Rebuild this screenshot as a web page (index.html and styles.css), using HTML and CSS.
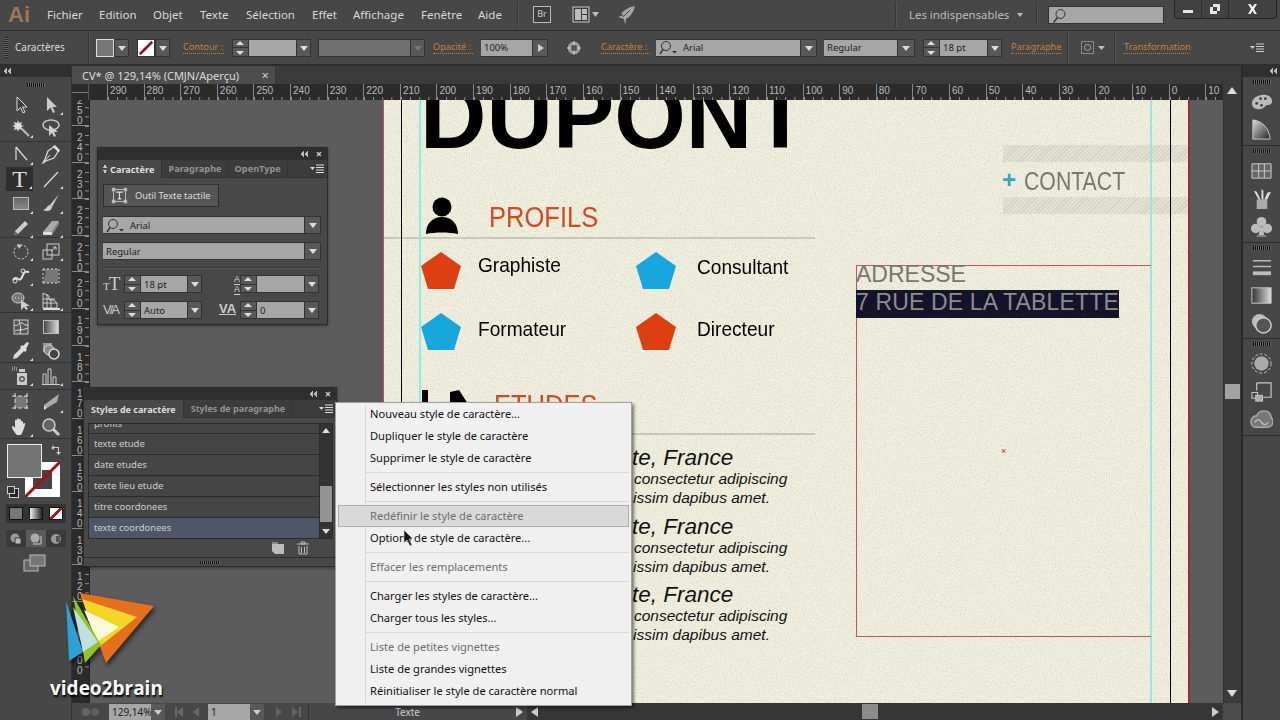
FILE: index.html
```html
<!DOCTYPE html>
<html lang="fr">
<head>
<meta charset="utf-8">
<title>Illustrator</title>
<link rel="stylesheet" href="styles.css">
</head>
<body>
<div class="app">

  <header class="menubar">
    <span class="ai">Ai</span>
    <nav class="menus">
      <span>Fichier</span><span>Edition</span><span>Objet</span><span>Texte</span><span>Sélection</span><span>Effet</span><span>Affichage</span><span>Fenêtre</span><span>Aide</span>
    </nav>
    <i class="vsep"></i>
    <span class="br">Br</span>
    <svg class="layout-ic" width="30" height="18" viewBox="0 0 30 18"><rect x="1" y="1" width="16" height="15" fill="#3d3d3d" stroke="#ccc"/><rect x="3" y="3" width="6" height="11" fill="#bbb"/><rect x="10" y="3" width="5" height="5" fill="#bbb"/><rect x="10" y="9" width="5" height="5" fill="#bbb"/><path d="M20 6h7l-3.500 5z" fill="#bbb"/></svg>
    <svg class="rocket-ic" width="20" height="20" viewBox="0 0 20 20"><path d="M19 1C13 2 8 5 5 9l3 1-6 2 6 2 1 5c1-2 1-3 1-5 5-3 8-8 9-13z" fill="#a6a6a6"/><path d="M14 5 7 12" stroke="#454545"/></svg>
    <span class="spring"></span>
    <i class="vsep"></i>
    <span class="workspace">Les indispensables</span>
    <i class="tri-s"></i>
    <i class="vsep"></i>
    <span class="searchbox">
      <svg width="14" height="16" viewBox="0 0 14 16"><circle cx="8.500" cy="6" r="4.500" fill="none" stroke="#333"/><path d="M5.500 9.500 1.500 14.500" stroke="#333" stroke-width="1.500"/></svg>
    </span>
    <div class="winbtns">
      <span class="wb wb-min"><i></i></span>
      <span class="wb wb-res"><svg width="12" height="12" viewBox="0 0 12 12"><path d="M4 1h7v7H8v3H1V4h3z M4 4v4h4V4z" fill="#e6e6e6" fill-rule="evenodd"/></svg></span>
      <span class="wb wb-x"><svg width="11" height="10" viewBox="0 0 11 10"><path d="M1 0h2.500L5.500 3 7.500 0H10L7 5l3 5H7.500L5.500 7l-2 3H1l3-5z" fill="#eee"/></svg></span>
    </div>
  </header>

  <section class="controlbar">
    <span class="lab-main">Caractères</span>
    <i class="csep"></i>
    <span class="swatch fillsw ml6"></span><span class="dd w15"></span>
    <span class="swatch strokesw ml8"><svg width="16" height="16" viewBox="0 0 18 18"><path d="M2 16 16 2" stroke="#8a1826" stroke-width="3"/></svg></span><span class="dd w15"></span>
    <span class="olab w41 ml13">Contour :</span>
    <span class="spin ml8"></span><span class="field w47"></span><span class="dd w15"></span>
    <span class="field dark w92 ml7"></span><span class="dd dim w15"></span>
    <span class="olab w40 ml8">Opacité :</span>
    <span class="field w51 ml8">100%</span><span class="dd play w16"></span>
    <svg class="globe" width="16" height="16" viewBox="0 0 16 16"><circle cx="8" cy="8" r="7" fill="#999" stroke="#333"/><circle cx="8" cy="8" r="3" fill="#555"/><path d="M8 1v4M8 11v4M1 8h4M11 8h4" stroke="#ddd"/></svg>
    <span class="olab w49 ml19">Caractère :</span>
    <span class="field w144 ml6"><svg class="mag" width="20" height="15" viewBox="0 0 20 15"><circle cx="7" cy="6" r="4.500" fill="none" stroke="#333"/><path d="M4 9.500 1 14" stroke="#333" stroke-width="1.400"/><path d="M13 11h5l-2.500 2.500z" fill="#333"/></svg>Arial</span><span class="dd w17"></span>
    <span class="field w73 ml7">Regular</span><span class="dd w18"></span>
    <span class="spin ml8"></span><span class="field w47">18 pt</span><span class="dd w15"></span>
    <span class="olab w50 ml9">Paragraphe</span>
    <i class="csep ml6"></i>
    <svg class="align-ic" width="28" height="16" viewBox="0 0 28 16"><rect x="1.500" y="1.500" width="12" height="12" fill="none" stroke="#aaa" stroke-dasharray="2 1"/><circle cx="7.500" cy="7.500" r="3" fill="none" stroke="#aaa"/><path d="M18 6h7l-3.500 4z" fill="#bbb"/></svg>
    <i class="csep ml6"></i>
    <span class="olab w66 ml8">Transformation</span>
    <svg class="pmenu-ic" width="14" height="10" viewBox="0 0 14 10"><path d="M0 3h5L2.500 6z" fill="#ccc"/><path d="M6 1h8M6 3.500h8M6 6h8M6 8.500h8" stroke="#ccc"/></svg>
  </section>

  <div class="workarea">

    <aside class="toolbar">
      <div class="dockhead left"><i class="chev"></i></div>
      <div class="handle"></div>
      <div class="toolgrp two">
        <span class="tool"><svg viewBox="0 0 20 20"><path d="M6 2v14l3.500-3.500L12 18l2-1-2.500-5H16z" fill="#3d3d3d" stroke="#ddd"/></svg></span>
        <span class="tool cn"><svg viewBox="0 0 20 20"><path d="M6 2v14l3.500-3.500L12 18l2-1-2.500-5H16z" fill="#ccc"/></svg></span>
        <span class="tool cn"><svg viewBox="0 0 20 20"><path d="M7 2l1 3 3-1-1 3 3 1-3 1 1 3-3-1-1 3-1-3-3 1 1-3-3-1 3-1-1-3 3 1z" fill="#ddd"/><path d="M10 10l8 8" stroke="#bbb" stroke-width="2"/></svg></span>
        <span class="tool"><svg viewBox="0 0 20 20"><ellipse cx="10" cy="7" rx="8" ry="5" fill="none" stroke="#ccc" stroke-width="1.500"/><path d="M8 7v11l3-3 2 4 2-1-2-4h4z" fill="#ccc"/></svg></span>
      </div>
      <div class="toolgrp four">
        <span class="tool cn"><svg viewBox="0 0 20 20"><path d="M5 3v13M5 3l11 13" fill="none" stroke="#ddd" stroke-width="1.200"/></svg></span>
        <span class="tool"><svg viewBox="0 0 20 20"><path d="M14 2l4 4-5 8-8 3-3 2 2-4 3-8z" fill="none" stroke="#ddd" stroke-width="1.200"/><path d="M13 1l6 6-2 1-5-5z" fill="#ddd"/><path d="M3 18 9 11" stroke="#ddd"/></svg></span>
        <span class="tool on cn"><b class="t-ic">T</b></span>
        <span class="tool cn"><svg viewBox="0 0 20 20"><path d="M3 18 17 3" stroke="#ddd" stroke-width="1.200"/></svg></span>
        <span class="tool cn"><svg viewBox="0 0 20 20"><defs><linearGradient id="gr" x1="0" y1="0" x2="0" y2="1"><stop offset="0" stop-color="#666"/><stop offset="1" stop-color="#888"/></linearGradient></defs><rect x="2.500" y="4.500" width="15" height="12" fill="url(#gr)" stroke="#bbb"/></svg></span>
        <span class="tool cn"><svg viewBox="0 0 20 20"><path d="M18 1 9 12l2 2z" fill="#ccc"/><path d="M9 12c-3 0-3 4-7 5 3 2 9 1 9-3z" fill="#ccc"/></svg></span>
        <span class="tool cn"><svg viewBox="0 0 20 20"><path d="M14 3l3 3L7 16l-4 1 1-4z" fill="#ccc"/><path d="M3 17l1-4 3 3z" fill="#666"/></svg></span>
        <span class="tool cn"><svg viewBox="0 0 20 20"><path d="M11 3h7l-7 11H2z" fill="#aaa"/><path d="M2 14h9v3H2z" fill="#ddd"/><path d="M11 14l7-11v3l-7 11z" fill="#888"/></svg></span>
      </div>
      <div class="toolgrp three">
        <span class="tool cn"><svg viewBox="0 0 20 20"><circle cx="10" cy="11" r="7" fill="none" stroke="#ccc" stroke-dasharray="2.500 1.500"/><path d="M6 3l5 1-3 4z" fill="#ccc"/></svg></span>
        <span class="tool cn"><svg viewBox="0 0 20 20"><rect x="2" y="9" width="9" height="9" fill="none" stroke="#ccc"/><rect x="6" y="3" width="12" height="11" fill="none" stroke="#ccc"/><path d="M10 10l5-4M12 6h3v3" fill="none" stroke="#ccc"/></svg></span>
        <span class="tool cn"><svg viewBox="0 0 20 20"><path d="M2 14c4-6 6 4 9-3s3-5 7-5" fill="none" stroke="#ddd" stroke-width="2"/><circle cx="4" cy="15" r="2" fill="none" stroke="#ddd"/><circle cx="12" cy="5" r="2" fill="none" stroke="#ddd"/></svg></span>
        <span class="tool"><svg viewBox="0 0 20 20"><path d="M2 3l3 3-3 11h15V3z" fill="#777"/><path d="M2 3h16M18 3v14M2 17h16M2 3v14" fill="none" stroke="#ddd" stroke-dasharray="2 2"/></svg></span>
        <span class="tool cn"><svg viewBox="0 0 20 20"><ellipse cx="7" cy="7" rx="6" ry="5" fill="#777" stroke="#ccc"/><path d="M4 7h1M7 7h1M10 7h1" stroke="#eee"/><path d="M10 9v10l3-3 2 3 2-1-2-3h4z" fill="#ccc"/></svg></span>
        <span class="tool cn"><svg viewBox="0 0 20 20"><path d="M2 2l6 3v4h5l3 3v5H2z" fill="none" stroke="#ccc"/><path d="M2 8h12M2 12h14M6 3v14M10 8v9" stroke="#ccc"/><path d="M2 18h17" stroke="#ddd" stroke-width="2"/></svg></span>
      </div>
      <div class="toolgrp five">
        <span class="tool"><svg viewBox="0 0 20 20"><rect x="3" y="3" width="14" height="14" fill="#555" stroke="#ccc"/><path d="M3 8c4 2 5-3 8-2s3 3 6 2M8 3c0 4 3 6 1 14M4 14c4-2 6 0 13-3" fill="none" stroke="#ddd"/></svg></span>
        <span class="tool"><svg viewBox="0 0 20 20"><defs><linearGradient id="gh" x1="0" y1="0" x2="1" y2="0"><stop offset="0" stop-color="#444"/><stop offset="1" stop-color="#ddd"/></linearGradient></defs><rect x="2.500" y="3.500" width="15" height="13" fill="url(#gh)" stroke="#bbb"/></svg></span>
        <span class="tool cn"><svg viewBox="0 0 20 20"><path d="M18 2l-2-1-4 4-1-1-2 2 1 1-7 7-1 4 4-1 7-7 1 1 2-2-1-1z" fill="#ddd"/></svg></span>
        <span class="tool"><svg viewBox="0 0 20 20"><rect x="2" y="2" width="9" height="9" fill="#999"/><circle cx="8" cy="9" r="5" fill="#888" stroke="#ddd"/><circle cx="13" cy="13" r="5" fill="#444" stroke="#ddd" stroke-width="1.500"/></svg></span>
      </div>
      <div class="toolgrp one">
        <span class="tool cn"><svg viewBox="0 0 20 20"><rect x="6" y="7" width="10" height="12" fill="#ccc"/><circle cx="11" cy="13" r="3" fill="#555"/><circle cx="11" cy="13" r="1.500" fill="#ccc"/><rect x="8" y="3" width="6" height="3" fill="#ccc"/><path d="M1 2h1M3 1h1M5 2h1M1 4h1M3 3h1M5 4h1" stroke="#ddd"/></svg></span>
        <span class="tool cn"><svg viewBox="0 0 20 20"><path d="M2 18V8h3v10M7 18V3h3v15M12 18v-7h3v7" fill="none" stroke="#ccc"/><path d="M1 18.500h18" stroke="#ccc"/></svg></span>
      </div>
      <div class="toolgrp six">
        <span class="tool"><svg viewBox="0 0 20 20"><rect x="4" y="4" width="12" height="12" fill="#777"/><path d="M1 4h18M1 16h18M4 1v18M16 1v18" stroke="#ddd" stroke-dasharray="4 2"/></svg></span>
        <span class="tool cn"><svg viewBox="0 0 20 20"><path d="M18 2 3 13l3 3 10-6z" fill="#aaa"/><path d="M3 13l3 3-3 2z" fill="#ddd"/></svg></span>
        <span class="tool cn"><svg viewBox="0 0 20 20"><path d="M6 18c-2-2-5-6-5-8s2-1 3 1V4c0-2 2-2 2 0V2.500c0-1.500 2-1.500 2 0V3c0-1.500 2-1.500 2 0v2c0-1.500 2-1.500 2 0v2c1-2 3-1 2 1-1 3-2 7-4 10z" fill="#ddd"/></svg></span>
        <span class="tool"><svg viewBox="0 0 20 20"><circle cx="8" cy="8" r="6" fill="#666" stroke="#ccc" stroke-width="1.500"/><path d="M12 12l6 6" stroke="#ccc" stroke-width="3"/></svg></span>
      </div>
      <div class="colors">
        <span class="tb-stroke"><svg width="35" height="35" viewBox="0 0 35 35"><path d="M0 35 35 0" stroke="#a01020" stroke-width="3"/></svg></span>
        <span class="tb-fill"></span>
        <svg class="swap" width="12" height="12" viewBox="0 0 12 12"><path d="M1 4 4 1v2h5v5h2L8.500 11 6 8h2V4H4v2z" fill="#ccc"/></svg>
        <span class="mini-def"></span>
      </div>
      <div class="modes"><i class="m-c"></i><i class="m-g"></i><i class="m-n"></i></div>
      <div class="draws">
        <span><svg width="12" height="12" viewBox="0 0 12 12"><circle cx="5" cy="5" r="4.500" fill="#999"/><rect x="5" y="5" width="6" height="6" fill="#bbb" stroke="#3a3a3a"/></svg></span>
        <span class="sel"><svg width="12" height="12" viewBox="0 0 12 12"><circle cx="5" cy="5" r="4.500" fill="#aaa"/><path d="M3 11h8V3" fill="none" stroke="#ccc"/></svg></span>
        <span><svg width="12" height="12" viewBox="0 0 12 12"><circle cx="6" cy="6" r="5" fill="#999"/><path d="M6 3h4v6H6z" fill="#555"/></svg></span>
      </div>
      <svg class="screen" width="24" height="18" viewBox="0 0 24 18"><rect x="1" y="6" width="14" height="11" fill="#666" stroke="#bbb"/><rect x="7" y="1" width="15" height="11" fill="#777" stroke="#bbb"/></svg>
    </aside>

    <main class="docarea">
      <div class="tabbar"><div class="doctab"><span>CV* @ 129,14% (CMJN/Aperçu)</span><b>×</b></div></div>
      <div class="hrow">
        <div class="rcorner"></div>
        <div class="hruler">
          <span>290</span><span>280</span><span>270</span><span>260</span><span>250</span><span>240</span><span>230</span><span>220</span><span>210</span><span>200</span><span>190</span><span>180</span><span>170</span><span>160</span><span>150</span><span>140</span><span>130</span><span>120</span><span>110</span><span>100</span><span>90</span><span>80</span><span>70</span><span>60</span><span>50</span><span>40</span><span>30</span><span>20</span><span>10</span><span>0</span><span>10</span>
        </div>
        <div class="vbtn up"></div>
      </div>
      <div class="midrow">
        <div class="vruler">
          <span>250</span><span>240</span><span>230</span><span>220</span><span>210</span><span>200</span><span>190</span><span>180</span><span>170</span><span>160</span><span>150</span><span>140</span><span>130</span><span>120</span><span>110</span><span>100</span>
        </div>
        <div class="canvas">
          <div class="page">
            <svg class="noise" width="806" height="603"><filter id="nz"><feTurbulence type="fractalNoise" baseFrequency="0.8" numOctaves="3" seed="4"/><feColorMatrix values="0 0 0 0 0.45  0 0 0 0 0.44  0 0 0 0 0.34  0 0 0 -0.8 0.48"/></filter><rect width="806" height="603" filter="url(#nz)"/></svg>
            <i class="hatch h1"></i><i class="hatch h2"></i>
            <i class="rule r1"></i><i class="rule r2"></i>
            <i class="trim t1"></i><i class="trim t2"></i>
            <i class="guide g1"></i><i class="guide g2"></i>
            <div class="name">DUPONT</div>
            <svg class="person" width="34" height="38" viewBox="0 0 34 38"><circle cx="17" cy="10" r="9.500"/><path d="M1 37C1 26 8 20 17 20s16 6 16 17c-10-2-22-2-32 0z"/></svg>
            <div class="sect profils">PROFILS</div>
            <svg class="pent p1" viewBox="0 0 40 37"><path d="M20 0 40 14 33 37H7L0 14z"/></svg>
            <svg class="pent p2" viewBox="0 0 40 37"><path d="M20 0 40 14 33 37H7L0 14z"/></svg>
            <svg class="pent p3" viewBox="0 0 40 37"><path d="M20 0 40 14 33 37H7L0 14z"/></svg>
            <svg class="pent p4" viewBox="0 0 40 37"><path d="M20 0 40 14 33 37H7L0 14z"/></svg>
            <div class="role ro1">Graphiste</div><div class="role ro2">Consultant</div><div class="role ro3">Formateur</div><div class="role ro4">Directeur</div>
            <svg class="grad" width="50" height="14" viewBox="0 0 50 14"><path d="M0 0h6v14H0zM28 2l9-2 9 14H28z"/></svg>
            <div class="sect etudes">ETUDES</div>
            <div class="edu e1"><div class="et">te, France</div><div class="el first">consectetur adipiscing</div><div class="el">issim dapibus amet.</div></div>
            <div class="edu e2"><div class="et">te, France</div><div class="el first">consectetur adipiscing</div><div class="el">issim dapibus amet.</div></div>
            <div class="edu e3"><div class="et">te, France</div><div class="el first">consectetur adipiscing</div><div class="el">issim dapibus amet.</div></div>
            <div class="plus">+</div>
            <div class="contact">CONTACT</div>
            <div class="frame"></div>
            <div class="addr">ADRESSE</div>
            <div class="addr-sel">7 RUE DE LA TABLETTE</div>
            <div class="center-x">×</div>
          </div>
        </div>
        <div class="vscroll"><i class="vthumb"></i></div>
      </div>
      <footer class="statusbar">
        <div class="status">
          <svg class="st-ic" width="20" height="12" viewBox="0 0 20 12"><circle cx="5" cy="6" r="4" fill="#666"/><circle cx="14" cy="6" r="4" fill="#5e5e5e"/></svg>
          <span class="sfield zoomf">129,14%</span><span class="sdd"></span>
          <span class="nav first"></span><span class="nav prev"></span>
          <span class="sfield pagef">1</span><span class="sdd"></span>
          <span class="nav next"></span><span class="nav last"></span>
          <i class="stsep"></i>
          <span class="st-label">Texte</span>
          <i class="tri-r"></i>
        </div>
        <div class="hscroll"><i class="tri-l"></i><i class="hthumb"></i><i class="tri-r end"></i></div>
        <div class="corner"></div>
      </footer>
    </main>

    <aside class="dock">
      <div class="dockhead right"><i class="chev"></i></div>
      <div class="dockgrp g-a">
        <div class="handle"></div>
        <svg class="dk" viewBox="0 0 24 24"><path d="M2 14C2 9 8 5 14 5s9 3 9 7-4 3-6 4-2 4-7 4-8-2-8-6z" fill="#bbb"/><circle cx="7" cy="14" r="1.500" fill="#444"/><circle cx="11" cy="9" r="1.500" fill="#444"/><circle cx="16" cy="9" r="1.500" fill="#444"/><circle cx="12" cy="16" r="1.500" fill="#444"/></svg>
        <svg class="dk" viewBox="0 0 24 24"><defs><linearGradient id="pie" x1="0" y1="0" x2="1" y2="1"><stop offset="0" stop-color="#ddd"/><stop offset="1" stop-color="#222"/></linearGradient></defs><path d="M3 2c10 1 17 9 18 20H3z" fill="url(#pie)" stroke="#ccc"/></svg>
      </div>
      <div class="dockgrp g-b">
        <div class="handle"></div>
        <svg class="dk" viewBox="0 0 24 24"><path d="M2 5h20v15H2z" fill="#666" stroke="#ccc"/><path d="M2 12.500h20M9 5v15M15 5v15" stroke="#ccc"/></svg>
        <svg class="dk" viewBox="0 0 24 24"><rect x="7" y="13" width="11" height="10" fill="#aaa"/><path d="M9 13 4 4l3 1 4 8zM12 13V2l2 2v9zM15 13l3-7 4-1-4 8z" fill="#ddd"/></svg>
        <svg class="dk" viewBox="0 0 24 24"><circle cx="12" cy="7" r="5" fill="#bbb"/><circle cx="6" cy="14" r="5" fill="#bbb"/><circle cx="18" cy="14" r="5" fill="#bbb"/><path d="M11 12h2l2 9H9z" fill="#bbb"/><path d="M7 22h10" stroke="#bbb"/></svg>
      </div>
      <div class="dockgrp g-b">
        <div class="handle"></div>
        <svg class="dk" viewBox="0 0 24 24"><path d="M3 5h19M3 11h19" stroke="#bbb" stroke-width="1.500"/><path d="M3 18h19" stroke="#bbb" stroke-width="4"/></svg>
        <svg class="dk" viewBox="0 0 24 24"><defs><linearGradient id="gd" x1="0" y1="0" x2="1" y2="0"><stop offset="0" stop-color="#333"/><stop offset="1" stop-color="#ddd"/></linearGradient></defs><rect x="2" y="4" width="20" height="16" fill="url(#gd)" stroke="#ccc"/></svg>
        <svg class="dk" viewBox="0 0 24 24"><circle cx="10" cy="10" r="8" fill="#bbb"/><circle cx="14" cy="14" r="8" fill="#555" stroke="#ccc" stroke-width="1.500"/></svg>
      </div>
      <div class="dockgrp g-b">
        <div class="handle"></div>
        <svg class="dk" viewBox="0 0 24 24"><circle cx="12" cy="12" r="10" fill="none" stroke="#ccc" stroke-dasharray="3 2"/><circle cx="12" cy="12" r="7.500" fill="#aaa"/></svg>
        <svg class="dk" viewBox="0 0 24 24"><path d="M7 3h15v15H14" fill="none" stroke="#ccc" stroke-width="1.200"/><path d="M7 3v8" stroke="#ccc" stroke-width="1.200"/><rect x="2" y="13" width="6" height="6" fill="none" stroke="#ccc"/><rect x="6" y="16" width="7" height="6" fill="#aaa" stroke="#ccc"/></svg>
        <svg class="dk" viewBox="0 0 24 24"><path d="M6 20C2 20 1 16 1 14s2-6 6-6c1-3 4-5 8-5s7 3 7 7c2 1 2 3 2 4 0 4-3 6-6 6z" fill="#777" stroke="#aaa" stroke-width="1.500"/><path d="M5 15c3-5 6-2 7 0s4 4 7 0" fill="none" stroke="#bbb" stroke-width="1.500"/></svg>
      </div>
    </aside>
  </div>

  <section class="panel charpanel">
    <div class="ptitle"><i class="chev"></i><b>×</b></div>
    <div class="ptabs">
      <span class="ptab active"><i class="updn"></i>Caractère</span><span class="ptab">Paragraphe</span><span class="ptab">OpenType</span>
      <svg class="pm" width="14" height="10" viewBox="0 0 14 10"><path d="M0 3h5L2.500 6z" fill="#ddd"/><path d="M6 1h8M6 3.500h8M6 6h8M6 8.500h8" stroke="#ddd"/></svg>
    </div>
    <div class="pbody">
      <div class="touchbtn">
        <svg width="17" height="17" viewBox="0 0 20 20"><rect x="3" y="3" width="14" height="14" fill="none" stroke="#ccc"/><path d="M1 1h4v4H1zM15 1h4v4h-4zM1 15h4v4H1zM15 15h4v4h-4z" fill="#bbb"/><path d="M6 6h8M10 6v8M8 14h4" stroke="#ddd" stroke-width="1.300" fill="none"/></svg>
        <span>Outil Texte tactile</span>
      </div>
      <div class="prow"><span class="field grow"><svg class="mag" width="20" height="15" viewBox="0 0 20 15"><circle cx="7" cy="6" r="4.500" fill="none" stroke="#333"/><path d="M4 9.500 1 14" stroke="#333" stroke-width="1.400"/><path d="M13 11h5l-2.500 2.500z" fill="#333"/></svg>Arial</span><span class="dd w17"></span></div>
      <div class="prow"><span class="field grow">Regular</span><span class="dd w17"></span></div>
      <i class="pdiv"></i>
      <div class="metrics">
        <span class="mi-ic"><b class="tt-s">T</b><b class="tt-b">T</b></span><span class="spin"></span><span class="field w46">18 pt</span><span class="dd w15"></span>
        <span class="mi-ic lead"><b>A</b><b>A</b></span><span class="spin"></span><span class="field w47"></span><span class="dd w15"></span>
        <span class="mi-ic va">V/A</span><span class="spin"></span><span class="field w46">Auto</span><span class="dd w15"></span>
        <span class="mi-ic va2">VA</span><span class="spin"></span><span class="field w47">0</span><span class="dd w15"></span>
      </div>
    </div>
  </section>

  <section class="panel stylepanel">
    <div class="ptitle"><i class="chev"></i><b>×</b></div>
    <div class="ptabs">
      <span class="ptab active">Styles de caractère</span><span class="ptab">Styles de paragraphe</span>
      <svg class="pm" width="14" height="10" viewBox="0 0 14 10"><path d="M0 3h5L2.500 6z" fill="#ddd"/><path d="M6 1h8M6 3.500h8M6 6h8M6 8.500h8" stroke="#ddd"/></svg>
    </div>
    <div class="listwrap">
      <div class="stlist">
        <div class="st clip">profils</div>
        <div class="st">texte etude</div>
        <div class="st">date etudes</div>
        <div class="st">texte lieu etude</div>
        <div class="st">titre coordonees</div>
        <div class="st sel">texte coordonees</div>
      </div>
      <div class="lscroll"><i class="up"></i><i class="thumb"></i><i class="dn"></i></div>
    </div>
    <div class="pfoot">
      <svg width="14" height="14" viewBox="0 0 14 14"><path d="M1 3h12v10H4L1 10z" fill="#bbb"/><path d="M1 1h6v2H1z" fill="#888"/></svg>
      <svg width="14" height="14" viewBox="0 0 14 14"><path d="M1 3h12M3 5v8h8V5M5 1h4v2H5zM5.500 6v6M8.500 6v6" fill="none" stroke="#bbb"/></svg>
    </div>
    <div class="handle pgrip"></div>
  </section>

  <div class="ctxmenu">
    <div class="mi">Nouveau style de caractère...</div>
    <div class="mi">Dupliquer le style de caractère</div>
    <div class="mi">Supprimer le style de caractère</div>
    <div class="msep"></div>
    <div class="mi">Sélectionner les styles non utilisés</div>
    <div class="msep"></div>
    <div class="mi off hot">Redéfinir le style de caractère</div>
    <div class="mi">Options de style de caractère...</div>
    <div class="msep"></div>
    <div class="mi off">Effacer les remplacements</div>
    <div class="msep"></div>
    <div class="mi">Charger les styles de caractère...</div>
    <div class="mi">Charger tous les styles...</div>
    <div class="msep"></div>
    <div class="mi off">Liste de petites vignettes</div>
    <div class="mi">Liste de grandes vignettes</div>
    <div class="mi">Réinitialiser le style de caractère normal</div>
  </div>

  <svg class="cursor" width="12" height="18" viewBox="0 0 12 18"><path d="M1 1v13l3-3 3 6 2-1-3-6h4z" fill="#111" stroke="#eee" stroke-width=".6"/></svg>

  <svg class="v2b-mark" width="100" height="80" viewBox="60 588 100 80">
    <path d="M80 593 154 606 106 663z" fill="#e4701e"/>
    <path d="M82 599 137 617 99 647z" fill="#f2d628"/>
    <path d="M84 610 119 627 97 642z" fill="#fbf9dc"/>
    <path d="M73 596 101 645 85 663z" fill="#93c522"/>
    <path d="M66 601 83 652 69 661z" fill="#2f9fd8"/>
    <path d="M73 607 98 642 83 652z" fill="#bfe0dc"/>
  </svg>
  <div class="v2b-text">video2brain</div>
</div>
</body>
</html>
```
FILE: styles.css
```css
*{box-sizing:border-box}
html,body{margin:0;padding:0;height:100%;overflow:hidden}
body{font-family:"Noto Sans","Liberation Sans",sans-serif;font-size:10px;color:#ddd;background:#333}
i{display:block;font-style:normal}
svg{display:block;flex:none}
.app{position:relative;width:1280px;height:720px;display:flex;flex-direction:column;overflow:hidden;background:#454545}

/* menu bar */
.menubar{height:30px;flex:none;display:flex;align-items:center;background:#474747;position:relative;padding-bottom:1px}
.ai{font:bold 22px/28px "Liberation Sans",sans-serif;color:#a0755c;width:47px;padding-left:8px;flex:none}
.menus{display:flex;font-size:11.500px;color:#d8d8d8;flex:none;width:470px}
.menus span:nth-child(1){width:52px}.menus span:nth-child(2){width:54px}.menus span:nth-child(3){width:47px}.menus span:nth-child(4){width:46px}.menus span:nth-child(5){width:66px}.menus span:nth-child(6){width:41px}.menus span:nth-child(7){width:68px}.menus span:nth-child(8){width:57px}.menus span:nth-child(9){width:39px}
.vsep{width:2px;height:25px;background:#363636;border-right:1px solid #555;flex:none}
.br{width:18px;height:17px;margin-left:14px;border:1px solid #bbb;background:#3d3d3d;font-size:9px;text-align:center;line-height:14px;color:#ccc;flex:none}
.layout-ic{margin-left:21px}
.rocket-ic{margin-left:14px}
.spring{flex:1}
.workspace{font-size:11.400px;color:#bdbdbd;margin-left:12px;flex:none;width:98px;white-space:nowrap}
.tri-s{width:0;height:0;border:3px solid transparent;border-top:4px solid #bbb;margin:3px 13px 0 10px;flex:none}
.searchbox{width:116px;height:18px;margin:0 10px;background:#a6a6a6;border:1px solid #333;padding:1px 3px;flex:none}
.winbtns{display:flex;align-self:flex-start;height:19px;width:103px;margin-right:3px;border:1px solid #222;border-top:0;border-radius:0 0 4px 4px;background:#414141;flex:none}
.wb{display:flex;align-items:center;justify-content:center;border-right:1px solid #2d2d2d}
.wb-min{width:27px}.wb-res{width:27px}.wb-x{flex:1;border:0}
.wb-min i{width:10px;height:3px;background:#e6e6e6;margin-top:5px}

/* control bar */
.controlbar{height:35px;flex:none;display:flex;align-items:center;padding-left:15px;background:#474747;border-top:1px solid #2e2e2e;border-bottom:1px solid #2e2e2e;position:relative;font-size:9.500px}
.controlbar::before{content:"";position:absolute;left:5px;top:6px;bottom:6px;width:3px;background:repeating-linear-gradient(#222 0 1px,#666 1px 2px)}
.controlbar>*{flex:none}
.lab-main{width:73px;color:#d8d8d8;font-size:10px;padding-bottom:2px}
.csep{height:33px;background:#363636;border-right:1px solid #555;width:2px}
.swatch{width:18px;height:18px;border:1px solid #ddd}
.fillsw{background:#777}
.strokesw{background:#fff;border-color:#333}
.field{display:flex;align-items:center;height:18px;background:#a6a6a6;color:#222;padding-left:3px;border-top:1px solid #333;border-bottom:1px solid #333;white-space:nowrap;font-size:9.500px}
.field.dark{background:#707070;border-left:1px solid #333}
.grow{flex:1}
.dd{height:18px;background:#585858;border:1px solid #333;display:flex;align-items:center;justify-content:center;flex:none}
.dd::after{content:"";width:0;height:0;border:4px solid transparent;border-top:5px solid #ddd;margin-top:5px}
.dd.dim::after{border-top-color:#777}
.dd.play::after{border:4px solid transparent;border-left:6px solid #ccc;margin:0 0 0 5px}
.spin{width:17px;height:18px;background:linear-gradient(#333,#333) 0 50%/100% 1px no-repeat #585858;border:1px solid #333;position:relative;flex:none}
.spin::before,.spin::after{content:"";position:absolute;left:3px;width:0;height:0;border:4px solid transparent}
.spin::before{top:-3px;border-bottom:4px solid #ddd}
.spin::after{bottom:-3px;border-top:4px solid #ddd}
.olab{color:#c8803a;font-size:9.200px;line-height:12px;border-bottom:1px dotted #c8803a;white-space:nowrap}
.mag{margin-right:4px}
.globe{margin-left:18px}
.align-ic{margin-left:11px}
.pmenu-ic{margin-left:60px}
.ml6{margin-left:6px}.ml7{margin-left:7px}.ml8{margin-left:8px}.ml9{margin-left:9px}.ml13{margin-left:13px}.ml19{margin-left:19px}
.w15{width:15px}.w16{width:16px}.w17{width:17px}.w18{width:18px}.w40{width:40px}.w41{width:41px}.w46{width:46px}.w47{width:47px}.w49{width:49px}.w50{width:50px}.w51{width:51px}.w66{width:66px}.w73{width:73px}.w92{width:92px}.w144{width:144px}

/* work area */
.workarea{flex:1;display:flex;min-height:0}
.toolbar{width:72px;flex:none;background:#474747;position:relative;border-right:1px solid #333}
.dockhead{height:12px;background:#2f2f2f;display:flex;align-items:center;padding:0 3px}
.dockhead.right{justify-content:flex-end}
.chev{width:8px;height:6px;background:
  linear-gradient(135deg,transparent 50%,#bbb 50%) 0 0/4px 3px no-repeat,
  linear-gradient(45deg,transparent 50%,#bbb 50%) 0 100%/4px 3px no-repeat,
  linear-gradient(135deg,transparent 50%,#bbb 50%) 4px 0/4px 3px no-repeat,
  linear-gradient(45deg,transparent 50%,#bbb 50%) 4px 100%/4px 3px no-repeat}
.handle{height:16px;background:repeating-linear-gradient(90deg,#111 0 1px,#666 1px 2px) 50% 50%/18px 4px no-repeat}
.toolgrp{display:grid;grid-template-columns:30px 30px;padding:0 6px;border-bottom:1px solid #333}
.toolgrp.two{height:49px;grid-auto-rows:23.500px}
.toolgrp.four{height:96px;grid-auto-rows:24.500px}
.toolgrp.three{height:75px;grid-auto-rows:25px}
.toolgrp.five{height:50px;grid-auto-rows:24px;padding-top:2px}
.toolgrp.one{height:27px;grid-auto-rows:25px}
.toolgrp.six{height:49px;grid-auto-rows:24.500px}
.tool{position:relative;display:flex;align-items:center;justify-content:center}
.tool svg{width:20px;height:20px}
.tool.cn::after{content:"";position:absolute;right:3px;bottom:2px;width:0;height:0;border-left:3px solid transparent;border-bottom:3px solid #ddd}
.tool.on{background:#2e2e2e;margin-right:3px}
.tool.on::after{right:1px}
.t-ic{font:400 24px/24px "Liberation Serif",serif;color:#ddd}
.colors{position:relative;height:58px}
.tb-fill{position:absolute;left:7px;top:5px;width:35px;height:34px;background:#747474;border:1px solid #eee}
.tb-stroke{position:absolute;left:25px;top:23px;width:35px;height:35px;background:#fff;box-shadow:inset 0 0 0 8px #fff,inset 0 0 0 20px #454545}
.swap{position:absolute;left:50px;top:5px}
.mini-def{position:absolute;left:7px;top:47px;width:8px;height:8px;background:#333;border:1px solid #ccc;box-shadow:3px 3px 0 #222,3px 3px 0 1px #ccc}
.modes{display:flex;justify-content:space-between;margin:7px 6px 0;width:60px;height:19px;background:#333;padding:3px}
.modes i{width:14px;height:13px;border:1px solid #111}
.m-c{background:#777}
.m-g{background:linear-gradient(90deg,#eee,#222)}
.m-n{background:linear-gradient(135deg,#fff 42%,#c01020 42% 58%,#fff 58%)}
.draws{display:flex;margin:7px 6px 0;width:60px;height:17px;background:#3a3a3a}
.draws span{flex:1;display:flex;align-items:center;justify-content:center}
.draws span.sel{background:#5a5a5a}
.screen{margin:7px 0 0 23px}

.docarea{flex:1;min-width:0;display:flex;flex-direction:column}
.tabbar{height:19px;flex:none;background:#3b3b3b;border-top:1px solid #2d2d2d}
.doctab{width:203px;height:18px;padding:0 6px 0 10px;background:#4d4d4d;display:flex;align-items:center;justify-content:space-between;font-size:11px;color:#dcdcdc;white-space:nowrap}
.doctab b{font-weight:400;font-size:13px;color:#ccc}
.hrow{height:16px;flex:none;display:flex;background:#2b2b2b}
.rcorner{width:17px;flex:none;border-right:1px solid #555;background:linear-gradient(#777,#777) 50% 8px/100% 1px no-repeat}
.hruler{width:1134px;flex:none;display:flex;padding-left:18px;overflow:hidden;font:10px/14px "Liberation Sans",sans-serif;color:#bbb}
.hruler span{flex:0 0 36.620px;padding-left:2px;border-left:1px solid #888;background:linear-gradient(90deg,#999 1px,transparent 1px) 0 100%/9.155px 3px repeat-x}
.vbtn{width:18px;flex:none;background:#3a3a3a;position:relative}
.vbtn.up::after{content:"";position:absolute;left:4px;top:3px;border:5px solid transparent;border-bottom:7px solid #ddd;border-top:0}
.midrow{flex:1;min-height:0;display:flex}
.vruler{width:18px;flex:none;background:#2b2b2b;overflow:hidden;border-right:1px solid #222;font:10px/10px "Liberation Sans",sans-serif;color:#bbb}
.vruler span{display:block;height:36.620px;padding:7px 6px 0 5px;word-break:break-all;border-top:1px solid #888;background:linear-gradient(#999 1px,transparent 1px) 100% 0/4px 9.155px repeat-y;overflow:hidden}
.vruler span:first-child{margin-top:-11.600px}
.canvas{flex:1;min-width:0;position:relative;overflow:hidden;background:#5c5c5c}
.vscroll{width:18px;flex:none;background:#3a3a3a;border-left:1px solid #333;position:relative}
.vscroll::after{content:"";position:absolute;left:3px;bottom:6px;border:5px solid transparent;border-top:7px solid #ddd;border-bottom:0}
.vthumb{position:absolute;left:1px;top:284px;width:15px;height:15px;background:#a3a3a3}

/* page artwork: free canvas */
.page{position:absolute;left:293px;top:0;bottom:0;width:807px;background:#f2f1e1;border-left:1px solid #c4525f;border-right:2px solid #a52a30;overflow:hidden;color:#000;font-family:"Liberation Sans",Arial,sans-serif}
.page>*{position:absolute}
.noise{left:0;top:0}
.hatch{left:619px;width:190px;height:17px;background:repeating-linear-gradient(135deg,#d2d1c3 0 1px,#e2e1d3 1px 3px)}
.h1{top:45px}.h2{top:97px}
.rule{left:0;width:431px;height:2px;background:#c8c7b9}
.r1{top:137px}.r2{top:333px}
.trim{width:1px;top:0;bottom:0;background:#000}
.t1{left:17px}.t2{left:786px}
.guide{width:2px;top:0;bottom:0;background:#96e8e2}
.g1{left:35px}.g2{left:766px}
.name{left:36px;top:0;font-size:92px;line-height:33px;font-weight:700;white-space:nowrap}
.person{left:41px;top:97px}
.sect{font-size:29px;line-height:29px;color:#d14a20;transform-origin:0 0;white-space:nowrap}
.profils{left:105px;top:103px;transform:scaleX(.88)}
.etudes{left:110px;top:291px;transform:scaleX(.88)}
.pent{width:40px;height:37px}
.p1{left:37px;top:152px;fill:#dc3f12}
.p2{left:252px;top:152px;fill:#17a7dc}
.p3{left:37px;top:213px;fill:#17a7dc}
.p4{left:252px;top:213px;fill:#dc3f12}
.role{font-size:21px;line-height:21px;transform:scaleX(.91);transform-origin:0 0;white-space:nowrap}
.ro1{left:94px;top:154px}.ro2{left:313px;top:156px}.ro3{left:94px;top:218px}.ro4{left:313px;top:218px}
.grad{left:38px;top:290px}
.edu{left:248px;font-style:italic;white-space:nowrap;color:#111}
.e1{top:347px}.e2{top:416px}.e3{top:484px}
.et{font-size:22.500px;line-height:22px}
.el{font-size:15.500px;line-height:19px;margin-left:1px}
.el.first{margin-top:0;margin-left:2px}
.plus{left:618px;top:68px;font-size:24px;line-height:24px;color:#2aa9c4;font-weight:700}
.contact{left:640px;top:69px;font-size:25px;line-height:25px;color:#77776f;transform:scaleX(.85);transform-origin:0 0;white-space:nowrap}
.frame{left:472px;top:165px;width:295px;height:372px;border:1px solid #c4525f;border-right:0}
.addr{left:472px;top:163px;font-size:23px;line-height:23px;color:#76766e;white-space:nowrap}
.addr-sel{left:472px;top:190px;width:263px;height:28px;background:#14132a;color:#8c8c90;font-size:23px;line-height:24px;letter-spacing:.15px;white-space:nowrap;overflow:hidden}
.center-x{left:617px;top:346px;font-size:9px;line-height:10px;color:#c4303a}

/* status bar */
.statusbar{height:17px;flex:none;display:flex;background:#363636}
.status{width:455px;flex:none;display:flex;align-items:center;padding-left:9px;background:#474747;font-size:10px}
.st-ic{margin-right:8px}
.sfield{height:16px;background:#a6a6a6;color:#222;display:flex;align-items:center;padding-left:3px;font-size:10px}
.zoomf{width:42px}.pagef{width:42px}
.sdd{width:14px;height:16px;background:#585858;display:flex;align-items:center;justify-content:center}
.sdd::after{content:"";border:4px solid transparent;border-top:5px solid #ccc;margin-top:5px}
.nav{width:16px;height:12px;position:relative}
.nav::after{content:"";position:absolute;top:1px;border:5px solid transparent}
.nav.first{margin-left:10px}.nav.first::after,.nav.prev::after{left:2px;border-left:0;border-right:6px solid #666}
.nav.first::before,.nav.last::before{content:"";position:absolute;top:1px;height:10px;width:2px;background:#666}
.nav.first::before{left:0}.nav.last::before{right:3px}
.nav.prev{margin-right:1px}
.nav.next{margin-left:8px}.nav.next::after,.nav.last::after{left:4px;border-right:0;border-left:6px solid #666}
.nav.last{margin-right:4px}
.stsep{width:1px;height:17px;background:#333}
.st-label{width:111px;text-align:right;color:#ccc;flex:none}
.tri-r{width:0;height:0;border:5px solid transparent;border-left:7px solid #ccc;border-right:0;margin-left:auto;margin-right:4px}
.hscroll{flex:1;display:flex;align-items:center;position:relative;padding:0 4px}
.tri-l{width:0;height:0;border:5px solid transparent;border-right:7px solid #ccc;border-left:0}
.hthumb{position:absolute;left:335px;top:1px;width:16px;height:15px;background:#8c8c8c}
.tri-r.end{margin-left:auto;margin-right:0}
.corner{width:18px;flex:none;background:#4b4b4b}

/* dock */
.dock{width:39px;flex:none;background:#474747;border-left:2px solid #2a2a2a;display:flex;flex-direction:column}
.dockgrp{border-bottom:1px solid #2c2c2c;display:flex;flex-direction:column;align-items:center;gap:5px}
.dockgrp .handle{width:100%;height:10px;flex:none;margin-bottom:-2px}
.g-a{height:69px}
.g-b{height:96.500px}
.dk{width:23px;height:23px}

/* floating panels */
.panel{position:absolute;background:#484848;border:1px solid #2c2c2c;box-shadow:0 1px 3px rgba(0,0,0,.4)}
.charpanel{left:97px;top:147px;width:231px;height:178px}
.stylepanel{left:83px;top:387px;width:254px;height:180px}
.ptitle{height:12px;background:#2f2f2f;display:flex;align-items:center;justify-content:flex-end;gap:8px;padding-right:5px;border-radius:3px 3px 0 0}
.ptitle b{font-size:11px;line-height:10px;color:#ccc;font-weight:700}
.ptabs{height:18px;background:#3c3c3c;display:flex;position:relative;border-bottom:1px solid #333}
.ptab{display:flex;align-items:center;padding:0 7px;font-size:9px;color:#929292;font-weight:700;border-right:1px solid #333;white-space:nowrap}
.ptab.active{background:#484848;color:#ddd;margin-bottom:-1px}
.charpanel .ptab{font-size:9.200px;padding:0 6px}
.charpanel .ptab.active{padding:0 7px 0 4px}
.updn{width:6px;height:10px;margin-right:2px;background:linear-gradient(#ccc,#ccc) 2px 1px/2px 2px no-repeat,linear-gradient(#ccc,#ccc) 1px 3px/4px 1px no-repeat,linear-gradient(#ccc,#ccc) 1px 6px/4px 1px no-repeat,linear-gradient(#ccc,#ccc) 2px 7px/2px 2px no-repeat}
.pm{position:absolute;right:3px;top:4px}
.pbody{padding:6px 6px 0 5px}
.touchbtn{width:116px;height:23px;background:#555;border:1px solid #2f2f2f;display:flex;align-items:center;gap:7px;padding-left:7px;color:#ddd;font-size:9.300px;white-space:nowrap}
.prow{display:flex;margin-top:9px;height:18px;width:218px}
.prow+.prow{margin-top:8px}
.pdiv{height:2px;background:#3a3a3a;margin:7px 0 6px;border-bottom:1px solid #555;width:218px}
.metrics{display:grid;grid-template-columns:21px 17px 46px 15px 17px 21px 17px 47px 15px;row-gap:8px;align-items:center;height:44px;width:218px}
.metrics>*{min-width:0}
.metrics>.mi-ic.lead,.metrics>.mi-ic.va2{grid-column:6}
.metrics>.mi-ic.va{grid-column:1}
.mi-ic{font:12px/18px "Liberation Serif",serif;color:#ccc;display:flex;align-items:baseline;white-space:nowrap;height:18px}
.tt-s{font-size:11px;font-weight:400}.tt-b{font-size:19px;font-weight:400;margin-left:-1px}
.lead{flex-direction:column;font:9px/9px "Liberation Sans",sans-serif;align-items:flex-end}
.lead b{font-weight:400;border-bottom:1px solid #ccc}
.va{font:13px/18px "Liberation Sans",sans-serif;letter-spacing:-2px}
.va2{font:700 13px/15px "Liberation Sans",sans-serif;text-decoration:underline}
.listwrap{display:flex;margin:5px 3px 0 4px;height:116px;border:1px solid #2c2c2c;background:#3a3a3a}
.stlist{flex:1;overflow:hidden}
.st{height:21px;line-height:20px;padding-left:5px;background:#454545;border-bottom:1px solid #2c2c2c;color:#ccc;font-size:9.500px;white-space:nowrap}
.st.clip{height:10px;line-height:0;overflow:hidden}
.st.sel{background:#505669;border-bottom:0}
.lscroll{width:13px;flex:none;background:#333;position:relative;border-left:1px solid #2c2c2c}
.lscroll .thumb{position:absolute;left:0;top:62px;width:12px;height:36px;background:#949494}
.lscroll .up{position:absolute;left:2px;top:4px;border:4px solid transparent;border-bottom:5px solid #ddd;border-top:0}
.lscroll .dn{position:absolute;left:2px;bottom:4px;border:4px solid transparent;border-top:5px solid #ddd;border-bottom:0}
.pfoot{display:flex;gap:11px;justify-content:flex-end;align-items:center;height:19px;padding-right:26px;border-bottom:1px solid #2c2c2c}
.pgrip{height:8px;background-size:20px 3px}

/* context menu */
.ctxmenu{position:absolute;left:335px;top:402px;width:297px;height:304px;background:#f0f0f0;border:1px solid #a0a0a0;box-shadow:2px 2px 3px rgba(0,0,0,.5);color:#111;font-size:11.100px;z-index:5}
.ctxmenu::before{content:"";position:absolute;left:29px;top:2px;bottom:2px;width:1px;background:#d8d8d8}
.mi{height:22px;line-height:22px;padding-left:34px;white-space:nowrap;position:relative}
.mi.off{color:#6d6d6d}
.mi.hot{margin:0 2px;padding-left:31px;background:#d9d9d9;border:1px solid #aeaeae;line-height:20px}
.msep{height:7.100px;position:relative}
.msep::after{content:"";position:absolute;left:30px;right:2px;top:3px;height:1px;background:#d8d8d8}
.cursor{position:absolute;left:403px;top:529px;z-index:6}
.v2b-mark{position:absolute;left:60px;top:588px;filter:drop-shadow(2px 3px 2px rgba(0,0,0,.55));z-index:7}
.v2b-text{position:absolute;left:50px;top:676px;font:700 19px/24px "Open Sans",sans-serif;color:#fff;text-shadow:1px 2px 2px #000;z-index:7}
```
